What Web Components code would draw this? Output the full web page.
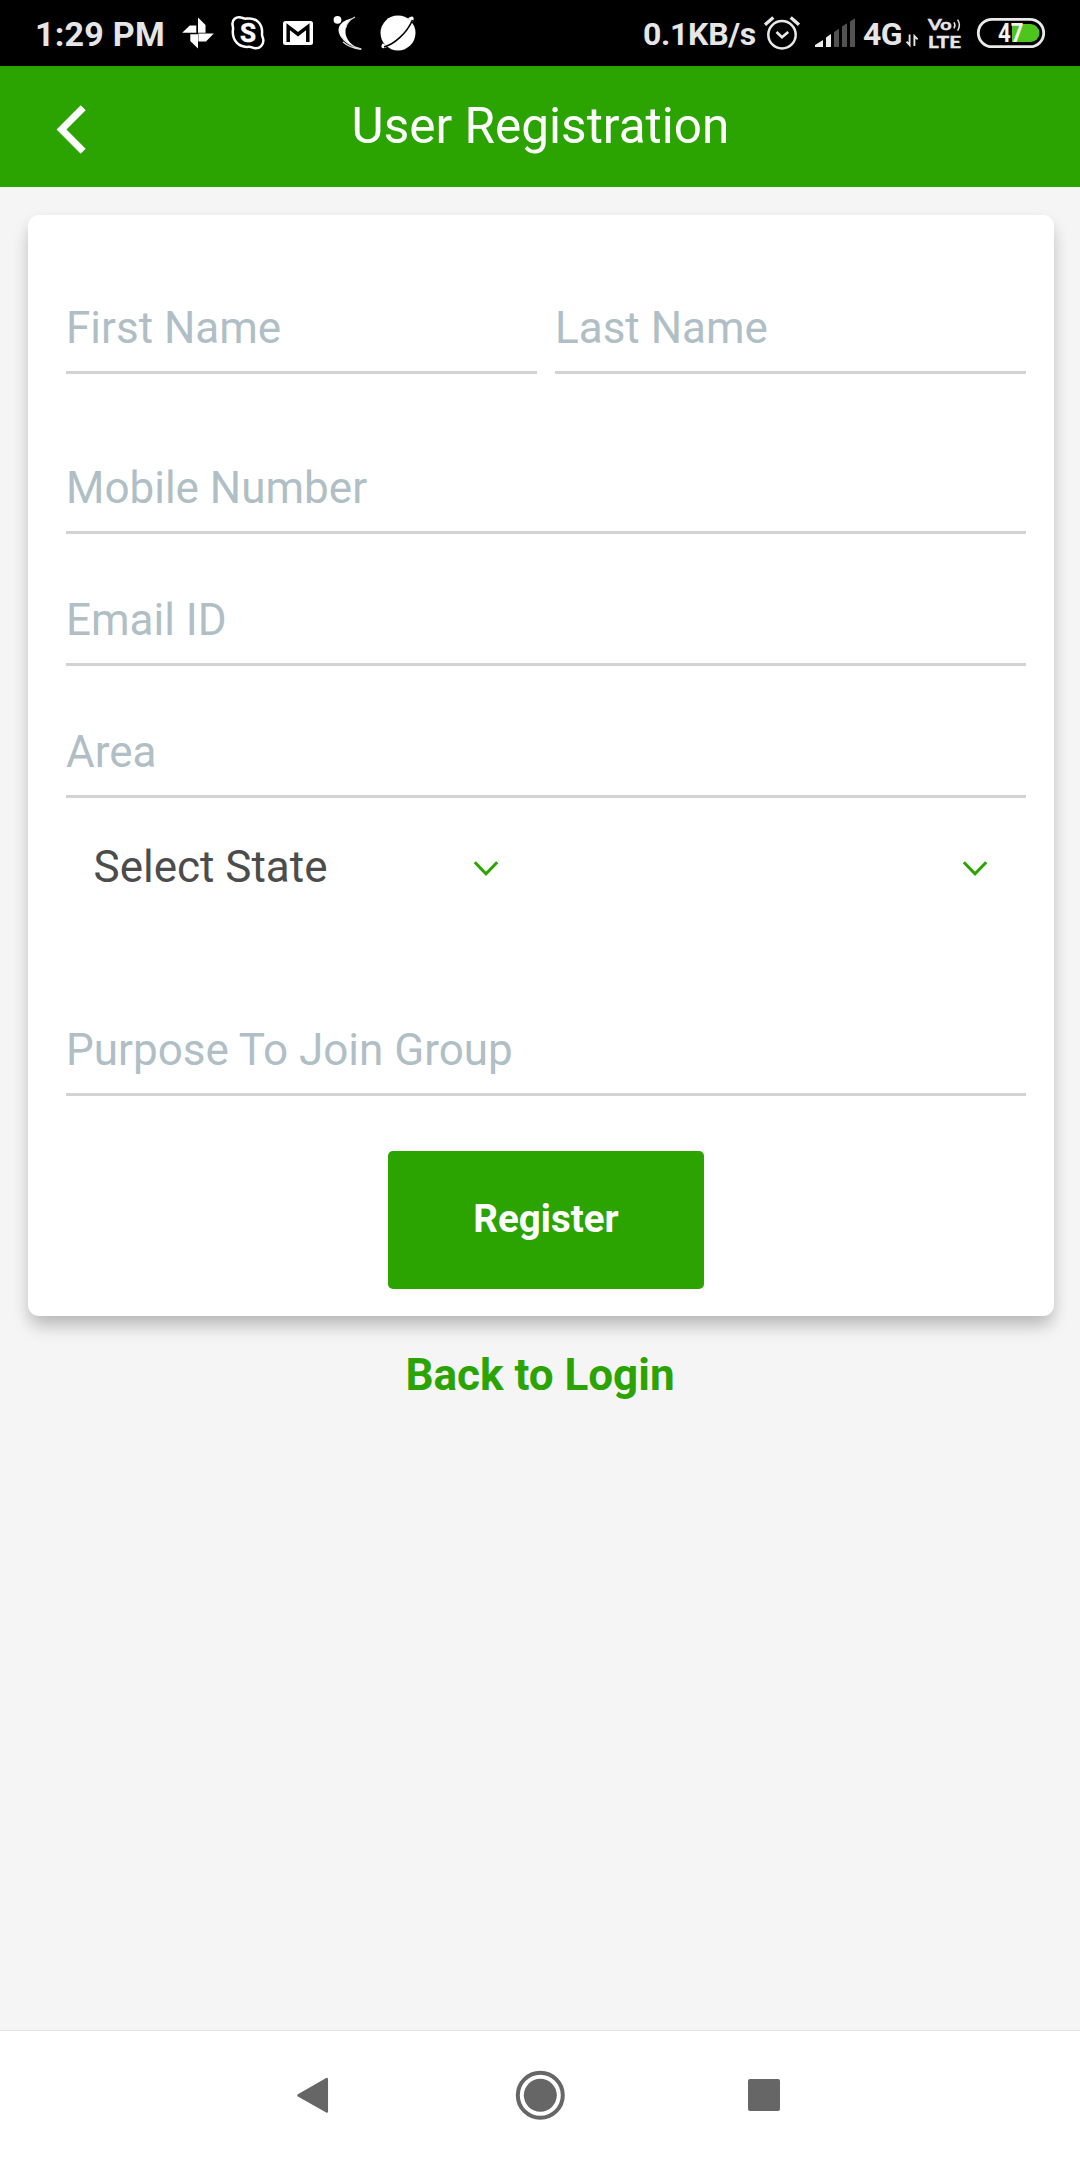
<!DOCTYPE html>
<html lang="en">
<head>
<meta charset="utf-8">
<title>User Registration</title>
<style>
  html, body { margin: 0; padding: 0; }
  body { width: 1080px; height: 2160px; overflow: hidden; font-family: Roboto, sans-serif; background: #f5f5f5; }
</style>
</head>
<body>
<registration-app></registration-app>
<script>
const define = (name, markup) => customElements.define(name, class extends HTMLElement {
  constructor() {
    super();
    this.attachShadow({ mode: 'open' }).innerHTML =
      typeof markup === 'function' ? markup(this) : markup;
  }
});

/* Status bar icons: [viewBox x, width, artwork] on a 66px tall bar */
const glyphs = {
  pinwheel: [176, 48, `<g fill="#fff"><path d="M198 17.500l7.500 7.500v7.800h-7.500z"/><path d="M213.800 33.500l-7.800 8h-7.600v-8z"/><path d="M198 48.500l-7.700-7.500v-6.700h7.700z"/><path d="M182.200 32.700l7.500-7.200h6.600v7.200z"/></g>`],
  skype: [224, 48, `<path d="M241 17.500c-5-1.500-9 2.500-8.500 7 .2 2 .8 3 .5 5-1.400 11 6 18.500 16 17.300 2-.2 3 .8 5.200 1.300 5.500 1 10-3.500 9-9-.3-1.800-1.300-2.800-1.200-5C263 23.500 256 17.200 246.500 18.600c-2 .4-3.500-.6-5.500-1.100z" fill="none" stroke="#fff" stroke-width="2.500"/><text x="248" y="42.300" text-anchor="middle" font-family="Roboto, sans-serif" font-weight="700" font-size="26" fill="#fff" stroke="#fff" stroke-width=".5">S</text>`],
  mail: [272, 52, `<rect x="283" y="21" width="30" height="24" rx="2.500" fill="#fff"/><path d="M288.200 42V26.700L298 34.200l9.800-7.500V42" fill="none" stroke="#000" stroke-width="3.500"/>`],
  runner: [324, 48, `<circle cx="337.500" cy="19.800" r="3.900" fill="#fff"/><path d="M352 18.300c-11 2.500-17 9.500-11 18.700 3 4.800 8 8 14 9.500-9-5.500-14.500-17-3-28.200z" fill="#fff"/><path d="M341 36c4.500 7.500 13 11.200 20.500 13.200M343 42c5 4.500 11 6.500 18 7.300M355 17c-6 3-8.500 6.500-9.300 11" fill="none" stroke="#ddd" stroke-width="1.200"/>`],
  planet: [372, 52, `<circle cx="398" cy="33" r="17.500" fill="#fff"/><path d="M384 44c-2 3-1.500 3.500 2 1.800M409 19.500c3-2.500 4.200-2 2.200 1.800" fill="none" stroke="#fff" stroke-width="3"/><path d="M384 47c10-2.500 23-14 28.500-27" fill="none" stroke="#000" stroke-width="1.600"/>`],
  alarm: [760, 44, `<g fill="none" stroke="#e9e9e9"><circle cx="782" cy="34.700" r="13.700" stroke-width="2.500"/><path d="M765 24.700l8.300-7.200M799 24.700l-8.300-7.200" stroke-width="3.300"/><path d="M776.500 32l5.500 5.300 6.200-5.300" stroke-width="2.600"/></g>`],
  signal: [804, 58, `<path fill="#eee" d="M815 47v-2l8-5v7zM826 47V37.500l5-3.500v13z"/><path fill="#525252" d="M834 47V32l5-3.300V47zM842 47V26.500l5-3.300V47zM850 47V21.500l5-3.300V47z"/>`],
  data: [904, 18, `<path d="M909.600 34.500V45l-3-3.300M914.400 46V36l3.200 3.300" fill="none" stroke="#e6e6e6" stroke-width="1.900"/>`],
  volte: [922, 46, `<g fill="#e6e6e6" font-family="Lato, sans-serif" font-weight="700" stroke="#e6e6e6" stroke-width=".5"><text x="928" y="30" font-size="16" textLength="23.500" lengthAdjust="spacingAndGlyphs">Vo</text><text x="928" y="47.800" font-size="17.500" textLength="33" lengthAdjust="spacingAndGlyphs">LTE</text></g><path d="M954 22.300q1.800 3 0 6M957.600 19.700q3.600 5.500 0 11" fill="none" stroke="#e6e6e6" stroke-width="1.500"/>`],
  battery: [968, 84, `<rect x="978.300" y="19.300" width="65.400" height="27.400" rx="13.700" fill="none" stroke="#eaeaea" stroke-width="2.800"/><path d="M1012 24h18.500a9 9 0 0 1 0 18H1012z" fill="#4dc51c"/><text x="998" y="41.700" font-family="Roboto, sans-serif" font-weight="700" font-size="25" fill="#f3f3f3" textLength="25.500" lengthAdjust="spacingAndGlyphs">47</text>`]
};
define('status-glyph', el => {
  const [x, w, art] = glyphs[el.getAttribute('name')];
  return `<style>:host{display:block;flex:none}svg{display:block}</style><svg width="${w}" height="66" viewBox="${x} 0 ${w} 66">${art}</svg>`;
});

define('status-bar', `
<style>
  :host { display: flex; height: 66px; background: #000; color: #e6e6e6; align-items: center; box-sizing: border-box; padding: 0 28px 0 35px; font-weight: 700; font-size: 34px; line-height: 66px; white-space: nowrap; }
  span { flex: none; padding-top: 2px; }
  .clock { width: 141px; letter-spacing: .25px; }
  .gap { flex: 1; }
  .rate { width: 117px; font-size: 32px; letter-spacing: -.3px; }
  .net { width: 42px; font-size: 32px; letter-spacing: -.6px; text-indent: 1px; }
</style>
<span class="clock">1:29 PM</span>
<status-glyph name="pinwheel"></status-glyph><status-glyph name="skype"></status-glyph><status-glyph name="mail"></status-glyph><status-glyph name="runner"></status-glyph><status-glyph name="planet"></status-glyph>
<span class="gap"></span>
<span class="rate">0.1KB/s</span>
<status-glyph name="alarm"></status-glyph><status-glyph name="signal"></status-glyph>
<span class="net">4G</span>
<status-glyph name="data"></status-glyph><status-glyph name="volte"></status-glyph><status-glyph name="battery"></status-glyph>`);

define('app-header', `
<style>
  :host { display: grid; grid-template-columns: 140px 1fr 140px; height: 121px; background: #2ba402; color: #fff; }
  svg { display: block; }
  .title { text-align: center; font-size: 49.5px; line-height: 120px; white-space: nowrap; padding-left: 1px; }
</style>
<svg width="140" height="121" viewBox="0 66 140 121"><path d="M83.200 107.700L61.500 129.500l21.700 21.800" fill="none" stroke="#fff" stroke-width="7"/></svg>
<span class="title"><slot></slot></span>`);

define('text-field', `
<style>
  :host { display: flex; flex-direction: column; justify-content: flex-end; flex: 1; height: 132px; box-sizing: border-box; border-bottom: 3px solid #d3d3d3; padding-bottom: 16px; color: #b0bec5; font-size: 44px; line-height: 53px; white-space: nowrap; }
</style>
<span><slot></slot></span>`);

define('select-box', `
<style>
  :host { display: flex; flex: 1; justify-content: space-between; height: 53px; padding: 0 38px 0 27.5px; color: #4c4c4c; font-size: 44px; line-height: 53px; }
  svg { display: block; margin-top: 19px; }
</style>
<span><slot></slot></span>
<svg width="26" height="18" viewBox="0 0 26 18"><path d="M1.800 2.200L13 13.800 24.200 2.200" fill="none" stroke="#2ba402" stroke-width="3"/></svg>`);

define('form-row', `<style>:host{display:flex;gap:18px}</style><slot></slot>`);

define('form-card', `
<style>
  :host { display: flex; flex-direction: column; box-sizing: border-box; margin: 28px 26px 0 28px; padding: 27px 28px 27px 38px; height: 1101px; border-radius: 11px; background: #fff; box-shadow: 0 12px 18px -2px rgba(0,0,0,.2), 0 6px 16px rgba(0,0,0,.07); }
</style>
<slot></slot>`);

define('action-button', `
<style>
  :host { display: block; align-self: center; width: 316px; height: 138px; border-radius: 5px; background: #2ba402; color: #fff; font-weight: 700; font-size: 38.500px; line-height: 136px; text-align: center; }
</style>
<slot></slot>`);

define('text-link', `<style>:host{display:block;text-align:center;color:#2ba402;font-weight:700;font-size:44px;line-height:53px}</style><slot></slot>`);

define('nav-bar', `
<style>
  :host { display: flex; height: 130px; box-sizing: border-box; padding: 38px 0 0 292px; background: #fff; border-top: 1px solid #e2e2e2; }
  svg { display: block; }
  .home { margin: 0 178px 0 182px; }
</style>
<svg width="40" height="52" viewBox="292 2069 40 52"><path d="M298.500 2095.300L326.800 2079v32.500z" fill="#666" stroke="#666" stroke-width="2.500" stroke-linejoin="round"/></svg>
<svg class="home" width="52" height="52" viewBox="514 2069 52 52"><circle cx="540.300" cy="2095.300" r="16.500" fill="#666"/><circle cx="540.300" cy="2095.300" r="22.500" fill="none" stroke="#666" stroke-width="4"/></svg>
<svg width="40" height="52" viewBox="744 2069 40 52"><rect x="748" y="2079" width="32" height="32" rx="2" fill="#666"/></svg>`);

define('registration-app', `
<style>
  :host { display: flex; flex-direction: column; width: 1080px; height: 2160px; background: #f5f5f5; }
  .second { margin-top: 28px; }
  .selects { margin: 43px 0 70px; }
  action-button { margin-top: 55px; }
  text-link { margin-top: 33px; }
  text-field { flex: 1 1 0; }
  form-card > text-field { flex: none; }
  nav-bar { margin-top: auto; }
</style>
<status-bar></status-bar>
<app-header>User Registration</app-header>
<form-card>
  <form-row><text-field>First Name</text-field><text-field>Last Name</text-field></form-row>
  <text-field class="second">Mobile Number</text-field>
  <text-field>Email ID</text-field>
  <text-field>Area</text-field>
  <form-row class="selects"><select-box>Select State</select-box><select-box></select-box></form-row>
  <text-field>Purpose To Join Group</text-field>
  <action-button>Register</action-button>
</form-card>
<text-link>Back to Login</text-link>
<nav-bar></nav-bar>
`);
</script>
</body>
</html>
